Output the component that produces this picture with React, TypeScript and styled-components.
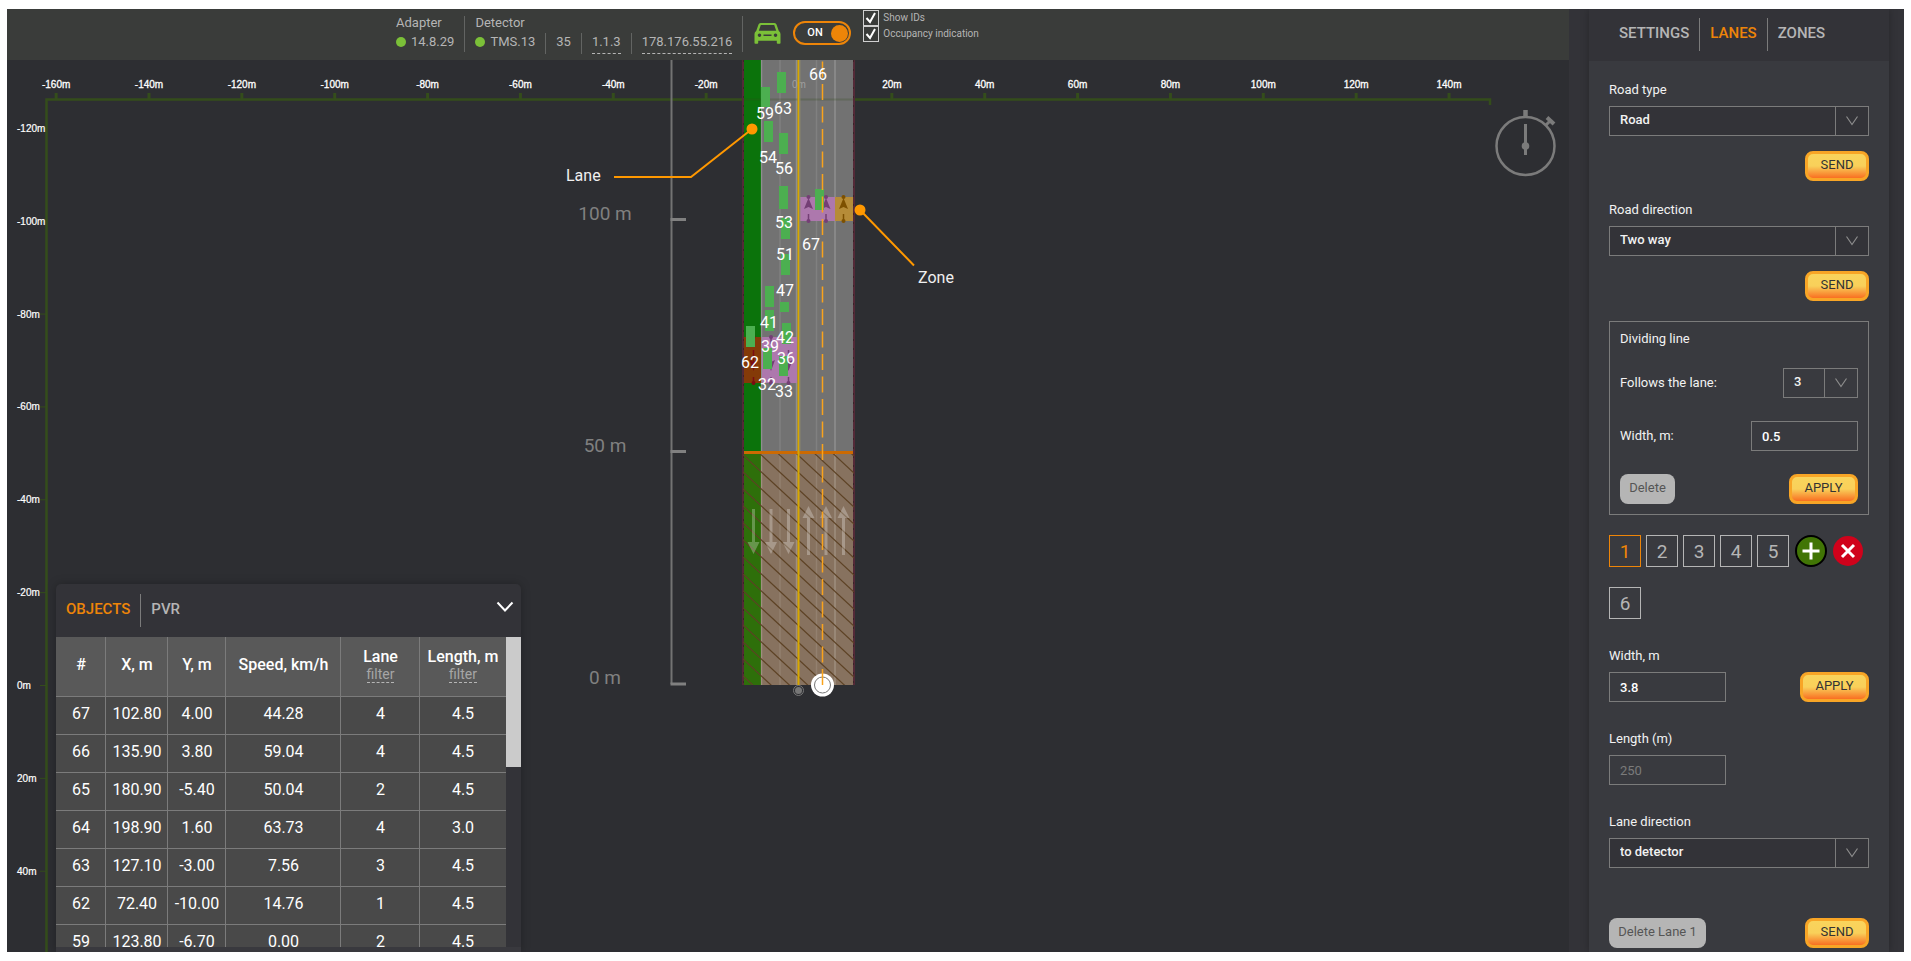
import React, { useId, useState } from "react";
import styled, { createGlobalStyle } from "styled-components";

const orange = "#ee8508";
const line = "#7b7b7b";
const green = "#7bc038";

const GlobalStyle = createGlobalStyle`
  *, *::before, *::after { box-sizing: border-box; }
  body {
    margin: 9px 7px;
    background: #fff;
    font-family: Roboto, "Liberation Sans", sans-serif;
    font-size: 13px;
    line-height: 16px;
    color: #f2f2f2;
  }
  button, input, select { font: inherit; margin: 0; }
`;

const Shell = styled.div`
  display: flex;
  height: calc(100vh - 18px);
  min-height: 640px;
  overflow: hidden;
  background: #333338;
`;

const Main = styled.main`
  flex: 1;
  min-width: 0;
  display: flex;
  flex-direction: column;
`;

/* ---------- top bar ---------- */

const TopBar = styled.header`
  flex: none;
  display: flex;
  align-items: flex-start;
  height: 51px;
  padding-left: 389px;
  background: #3a3c3a;
  color: #b5b5b5;
`;

const Device = styled.section`
  display: flex;
  flex-direction: column;
  gap: 4px;
  height: 36px;
  margin-top: 7px;
  padding-right: 10px;
  margin-right: 10px;
  border-right: 1px solid #626462;
`;

const DeviceName = styled.h2`
  margin: 0;
  font-size: 13px;
  font-weight: 400;
  line-height: 13px;
`;

const DeviceInfo = styled.div`
  display: flex;
  height: 21px;
`;

const InfoCell = styled.span`
  display: flex;
  align-items: flex-start;
  gap: 5px;
  height: 21px;
  line-height: 18px;
  & + & {
    margin-left: 10px;
    padding-left: 10px;
    border-left: 1px solid #626462;
  }
`;

const StatusDot = styled.i`
  width: 10px;
  height: 10px;
  margin-top: 4px;
  border-radius: 50%;
  background: ${green};
`;

const EditLink = styled.a`
  height: 21px;
  color: inherit;
  text-decoration: none;
  border-bottom: 1px dashed #b5b5b5;
`;

const CarIcon = styled.svg`
  width: 27px;
  height: 22px;
  margin: 13px 0 0 1px;
`;

const Toggle = styled.button`
  display: flex;
  align-items: center;
  justify-content: space-between;
  width: 58px;
  height: 24px;
  margin: 12px 12px 0 12px;
  padding: 0 1px 0 12px;
  border: 2px solid ${orange};
  border-radius: 12px;
  background: transparent;
  color: #fff;
  font-size: 11px;
  font-weight: 500;
`;

const Knob = styled.span`
  width: 17px;
  height: 17px;
  border-radius: 50%;
  background: ${orange};
`;

const Checks = styled.div`
  display: flex;
  flex-direction: column;
  margin-top: 1px;
`;

const Check = styled.label`
  display: flex;
  gap: 4px;
  font-size: 10px;
  line-height: 15px;
`;

const CheckBox = styled.input`
  appearance: none;
  width: 16px;
  height: 16px;
  border: 1px solid #d0d0d0;
  background: url("data:image/svg+xml,%3Csvg xmlns='http://www.w3.org/2000/svg' viewBox='0 0 14 14'%3E%3Cpath d='M2.500 7l3.500 4l5 -9' fill='none' stroke='white' stroke-width='2'/%3E%3C/svg%3E");
`;

/* ---------- map ---------- */

const Stage = styled.div`
  position: relative;
  flex: 1;
  min-height: 0;
  overflow: hidden;
  background: #2d2e32;
`;

const MapSvg = styled.svg`
  display: block;
  width: 100%;
  height: 100%;
`;

/* Map drawing is laid out in window units; the group shifts it to the stage. */
const PX_PER_20M = 92.86;
const ZERO_X = 799;
const ZERO_Y = 685;

const cars: [number, number, number][] = [
  [777, 72, 21], [761, 87, 20], [764, 121, 21], [779, 133, 21], [779, 186, 23],
  [781, 218, 21], [781, 254, 21], [815, 189, 21], [765, 286, 21], [780, 302, 10],
  [765, 310, 21], [782, 323, 21], [746, 326, 21], [763, 348, 21], [779, 356, 20],
];

const carLabels: [number, number, number][] = [
  [66, 818, 80], [63, 783, 114], [59, 765, 119], [54, 768, 163], [56, 784, 174],
  [53, 784, 228], [67, 811, 250], [51, 785, 260], [47, 785, 296], [41, 769, 328],
  [42, 785, 343], [39, 770, 352], [36, 786, 364], [62, 750, 368], [32, 767, 390],
  [33, 784, 397],
];

const hatchYs = Array.from({ length: 21 }, (_, i) => 353 + i * 17);

function Ruler() {
  const xs = [-160, -140, -120, -100, -80, -60, -40, -20, 20, 40, 60, 80, 100, 120, 140];
  const ys = [-120, -100, -80, -60, -40, -20, 0, 20, 40];
  return (
    <g fontFamily='"Liberation Sans", Arial, sans-serif' fontSize="10" fill="#fff">
      <path d="M46.5 960V99.500H1490V105" fill="none" stroke="#344d1b" strokeWidth="2.500" />
      {xs.map((m) => {
        const x = ZERO_X + (m / 20) * PX_PER_20M;
        return (
          <g key={m}>
            <rect x={x - 1.5} y="93" width="3" height="6" fill="#344d1b" />
            <text x={x} y="88" textAnchor="middle" stroke="#fff" strokeWidth="0.3">{m}m</text>
          </g>
        );
      })}
      {ys.map((m) => {
        const y = ZERO_Y + (m / 20) * PX_PER_20M;
        return (
          <g key={m}>
            <rect x="40" y={y} width="6" height="1" fill="#344d1b" />
            <text x="17" y={y + 4} stroke="#fff" strokeWidth="0.2">{m}m</text>
          </g>
        );
      })}
    </g>
  );
}

function ZoneArrow({ x, top, bottom, up, color }: { x: number; top: number; bottom: number; up?: boolean; color: string }) {
  const head = up
    ? `M${x} ${top + 1}l4.500 11l-4.500 -2l-4.500 2z`
    : `M${x} ${bottom - 12}l4 -11l-4 2l-4 -2z`;
  return (
    <g fill={color} stroke="none">
      <circle cx={x} cy={top} r="2" />
      <circle cx={x} cy={bottom} r="2" />
      <path d={head} />
      <path d={up ? `M${x} ${bottom - 7}V${bottom}` : `M${x} ${top}v7M${x} ${top + 13}V${bottom - 20}M${x} ${bottom - 6}V${bottom}`} stroke={color} strokeWidth="1.500" />
    </g>
  );
}

function LaneArrow({ x, up }: { x: number; up?: boolean }) {
  const d = up
    ? `M${x} 506l6 12h-4.500v37h-3v-37h-4.500z`
    : `M${x} 554l6 -12h-4.500v-33h-3v33h-4.500z`;
  return <path d={d} fill="#fff" fillOpacity="0.27" />;
}

function Road() {
  return (
    <g>
      <defs>
        <clipPath id="nearField"><rect x="743" y="454" width="111" height="231" /></clipPath>
      </defs>
      <rect x="742" y="60" width="3" height="625" fill="#542a38" />
      <rect x="852" y="60" width="3" height="625" fill="#542a38" />
      <path d="M743.500 60V685M853.500 60V685" stroke="#3b2328" strokeDasharray="2 7" />
      <rect x="744" y="60" width="17" height="394" fill="#0b730b" />
      <rect x="761" y="60" width="92" height="394" fill="#727272" />
      <rect x="744" y="454" width="17" height="231" fill="#2e6f0a" />
      <rect x="761" y="454" width="92" height="231" fill="#87725f" />
      <path d="M761.500 60V685M796.500 60V685M835 60V685" stroke="#fff" strokeOpacity="0.2" strokeWidth="1.500" />
      <path d="M780 60V685M816.500 60V685" stroke="#fff" strokeOpacity="0.1" strokeWidth="1.500" />
      <path d="M744 99.500H853" stroke="#344d1b" strokeOpacity="0.25" strokeWidth="2" />
      <text x="799" y="88" textAnchor="middle" fontFamily='"Liberation Sans", Arial, sans-serif' fontSize="10" fill="#a0a0a0">0m</text>

      <rect x="800" y="197" width="35" height="24" fill="#ad78ad" />
      <rect x="835" y="197" width="18" height="24" fill="#b68c38" />
      <rect x="744" y="337" width="17" height="46" fill="#843a08" />
      <rect x="762" y="337" width="35" height="46" fill="#ad78ad" />
      <ZoneArrow x={808.5} top={197} bottom={221} up color="#743f75" />
      <ZoneArrow x={826} top={197} bottom={221} up color="#743f75" />
      <ZoneArrow x={843.5} top={197} bottom={221} up color="#7d5000" />
      <ZoneArrow x={753.5} top={337} bottom={383} color="#7a0c12" />
      <ZoneArrow x={771} top={337} bottom={383} color="#743f75" />
      <ZoneArrow x={788.5} top={337} bottom={383} color="#743f75" />

      <g clipPath="url(#nearField)" stroke="#5d4225" strokeWidth="1.200">
        {hatchYs.map((y) => <path key={y} d={`M743 ${y}l111 103`} />)}
      </g>
      {[753.5, 771, 788.5].map((x) => <LaneArrow key={x} x={x} />)}
      {[808.5, 826, 843.5].map((x) => <LaneArrow key={x} x={x} up />)}

      <rect x="744" y="451" width="109" height="3" fill="#cc6a02" />
      <path d="M798.500 60V685" stroke="#d8a800" strokeWidth="2" />
      <path d="M799.900 60V451" stroke="#8f8a6c" strokeWidth="1" />

      <g fill="#4caf50">
        {cars.map(([x, y, h]) => <rect key={`${x}-${y}`} x={x} y={y} width="9" height={h} />)}
      </g>
      <circle cx="798.500" cy="690.500" r="5" fill="none" stroke="#777" />
      <circle cx="798.500" cy="690.500" r="3.500" fill="#777" />
      <circle cx="822.500" cy="685" r="11.500" fill="#fff" />
      <circle cx="822.500" cy="685" r="8" fill="none" stroke="#777" />
      <path d="M822.500 685V60" stroke="#f9a31c" strokeWidth="1.500" strokeDasharray="16 6.500" />
      <g fontSize="16" fill="#fff" textAnchor="middle">
        {carLabels.map(([id, x, y]) => <text key={id} x={x} y={y}>{id}</text>)}
      </g>
    </g>
  );
}

function DistanceScale() {
  return (
    <g>
      <path d="M671.500 60V684" stroke="#737373" strokeWidth="2" />
      <path d="M670.500 219.500H686M670.500 451.500H686M670.500 684H686" stroke="#808080" strokeWidth="3" />
      <g fontSize="19" fill="#808080" textAnchor="middle">
        <text x="605" y="220">100 m</text>
        <text x="605" y="452">50 m</text>
        <text x="605" y="684">0 m</text>
      </g>
    </g>
  );
}

function Callouts() {
  return (
    <g>
      <path d="M614 177H691L752 129M860 210L914 265.500" fill="none" stroke="#ff9800" strokeWidth="2" />
      <circle cx="752" cy="129" r="5.500" fill="#ff9800" />
      <circle cx="860" cy="210" r="5.500" fill="#ff9800" />
      <g fontSize="16" fill="#f0f0f0">
        <text x="566" y="181">Lane</text>
        <text x="918" y="283">Zone</text>
      </g>
    </g>
  );
}

function Compass() {
  return (
    <g stroke="#7b7b7b" fill="none">
      <circle cx="1525.500" cy="146" r="29" strokeWidth="2.500" />
      <path d="M1525.500 110V117" strokeWidth="4.500" />
      <path d="M1546 125l4.500 -4.500" strokeWidth="3" />
      <path d="M1547 117.500l7 6.500" strokeWidth="4" />
      <path d="M1525.500 124V155" strokeWidth="3" />
      <circle cx="1525.500" cy="146" r="3.800" fill="#7b7b7b" stroke="none" />
    </g>
  );
}

/* ---------- objects panel ---------- */

const ObjectsPanel = styled.section`
  position: absolute;
  left: 49px;
  bottom: 0;
  display: flex;
  flex-direction: column;
  width: 465px;
  height: 368px;
  border-radius: 5px 5px 0 0;
  background: #333338;
  box-shadow: 0 0 10px rgba(0, 0, 0, 0.25);
`;

const PanelHead = styled.div`
  flex: none;
  display: flex;
  justify-content: space-between;
  align-items: flex-start;
  height: 53px;
  padding: 10px 7px 0 0;
`;

const Tabs = styled.nav`
  display: flex;
`;

const Tab = styled.button<{ $active?: boolean }>`
  height: 33px;
  padding: 0 10px 2px;
  border: 0;
  background: none;
  color: ${(p) => (p.$active ? orange : "#b5b5b5")};
  font-size: 15px;
  font-weight: 500;
  line-height: 31px;
  & + & { border-left: 1px solid ${line}; }
`;

const Collapse = styled.button`
  width: 18px;
  height: 28px;
  padding: 1px 0 0;
  border: 0;
  background: none;
`;

const TableScroll = styled.div`
  display: flex;
  align-items: flex-start;
  height: 310px;
  overflow: hidden;
`;

const ScrollThumb = styled.div`
  flex: 1;
  height: 130px;
  background: #cbcbcb;
`;

const Table = styled.table`
  width: 450px;
  table-layout: fixed;
  border-collapse: separate;
  border-spacing: 0;
  font-size: 16px;
  line-height: 18px;
  text-align: center;
  color: #fff;
`;

const HeadCell = styled.th<{ $w: number }>`
  width: ${(p) => p.$w}px;
  height: 60px;
  padding: 0 0 3px;
  background: #595959;
  border-bottom: 1px solid ${line};
  font-weight: 500;
  white-space: nowrap;
  & + & { box-shadow: -1px 0 0 ${line}; }
`;

const FilterLink = styled.a`
  display: table;
  margin: 0 auto;
  color: #a6a6a6;
  font-size: 14px;
  font-weight: 400;
  line-height: 16px;
  text-decoration: none;
  border-bottom: 1px dashed #b5b5b5;
`;

const Cell = styled.td`
  height: 38px;
  padding: 0 0 3px;
  background: #494949;
  border-bottom: 1px solid ${line};
  & + & { box-shadow: -1px 0 0 ${line}; }
`;

const PanelFoot = styled.div`
  flex: 1;
  background: #39393e;
`;

const columns: { name: string; w: number; filter?: boolean }[] = [
  { name: "#", w: 50 },
  { name: "X, m", w: 62 },
  { name: "Y, m", w: 58 },
  { name: "Speed, km/h", w: 115 },
  { name: "Lane", w: 79, filter: true },
  { name: "Length, m", w: 86, filter: true },
];

const rows = [
  ["67", "102.80", "4.00", "44.28", "4", "4.5"],
  ["66", "135.90", "3.80", "59.04", "4", "4.5"],
  ["65", "180.90", "-5.40", "50.04", "2", "4.5"],
  ["64", "198.90", "1.60", "63.73", "4", "3.0"],
  ["63", "127.10", "-3.00", "7.56", "3", "4.5"],
  ["62", "72.40", "-10.00", "14.76", "1", "4.5"],
  ["59", "123.80", "-6.70", "0.00", "2", "4.5"],
];

/* ---------- sidebar ---------- */

const Sidebar = styled.aside`
  flex: none;
  display: flex;
  flex-direction: column;
  width: 300px;
  margin: 0 15px 0 20px;
  box-shadow: 0 0 8px rgba(0, 0, 0, 0.25);
`;

const SideTabs = styled(Tabs)`
  flex: none;
  height: 52px;
  padding: 9px 20px 0;
  background: #333338;
`;

const SideBody = styled.form`
  flex: 1;
  display: flex;
  flex-direction: column;
  padding: 21px 20px 0;
  background: #393a3f;
`;

const Field = styled.div<{ $w?: number }>`
  display: flex;
  flex-direction: column;
  gap: 8px;
  width: ${(p) => (p.$w ? `${p.$w}px` : "auto")};
`;

const Row = styled.div<{ $end?: boolean; $top?: number; $bottom?: number; $align?: string }>`
  display: flex;
  justify-content: ${(p) => (p.$end ? "flex-end" : "space-between")};
  align-items: ${(p) => p.$align ?? "center"};
  margin-top: ${(p) => p.$top ?? 0}px;
  margin-bottom: ${(p) => p.$bottom ?? 0}px;
`;

const SelectBox = styled.div<{ $w?: number }>`
  position: relative;
  width: ${(p) => (p.$w ? `${p.$w}px` : "100%")};
`;

const SelectInput = styled.select<{ $plain?: boolean }>`
  appearance: none;
  display: block;
  width: 100%;
  height: 30px;
  padding: 0 34px 2px 10px;
  border: 1px solid ${line};
  border-radius: 0;
  background: ${(p) => (p.$plain ? "transparent" : "#333338")};
  color: #f2f2f2;
  font-weight: 500;
`;

const SelectArrow = styled.svg`
  position: absolute;
  top: 0;
  right: 0;
  width: 34px;
  height: 30px;
  pointer-events: none;
`;

const TextInput = styled.input<{ $w: number }>`
  width: ${(p) => p.$w}px;
  height: 30px;
  padding: 0 10px;
  border: 1px solid ${line};
  background: transparent;
  color: #fff;
  font-weight: 500;
  &:disabled { color: #7b7b7b; font-weight: 400; }
`;

const Action = styled.button<{ $w: number }>`
  width: ${(p) => p.$w}px;
  height: 30px;
  padding: 0 0 2px;
  border: 3px solid #f8a526;
  border-radius: 8px;
  background: linear-gradient(#f9d45c 0%, #f9d05a 50%, #f96f22 100%);
  color: #333;
  font-size: 13px;
`;

const GreyAction = styled(Action)`
  border: 0;
  background: #b5b5b5;
  color: #555;
`;

const Fieldset = styled.div`
  margin-top: 20px;
  padding: 9px 10px 10px;
  border: 1px solid ${line};
`;

const LaneGrid = styled.div`
  display: grid;
  grid-template-columns: repeat(7, 32px);
  gap: 20px 5px;
  align-items: center;
  margin: 20px 0 29px;
`;

const LaneButton = styled.button<{ $active?: boolean }>`
  width: 32px;
  height: 32px;
  padding: 2px 0 0;
  border: 1px solid ${(p) => (p.$active ? orange : "#b5b5b5")};
  background: none;
  color: ${(p) => (p.$active ? orange : "#b5b5b5")};
  font-size: 19px;
`;

const RoundButton = styled.button`
  display: grid;
  place-items: center;
  width: 34px;
  height: 32px;
  padding: 0;
  border: 0;
  background: none;
`;

function Select({ id, options, width, plain }: { id: string; options: string[]; width?: number; plain?: boolean }) {
  return (
    <SelectBox $w={width}>
      <SelectInput id={id} $plain={plain}>
        {options.map((o) => <option key={o}>{o}</option>)}
      </SelectInput>
      <SelectArrow viewBox="0 0 34 30" fill="none" aria-hidden="true">
        <path d="M0.500 0V30" stroke={line} />
        <path d="M11.500 10.500l5.500 8l5.500 -8" stroke="#8c8c8c" strokeWidth="1.200" />
      </SelectArrow>
    </SelectBox>
  );
}

function SelectField({ label, options }: { label: string; options: string[] }) {
  const id = useId();
  return (
    <Field>
      <label htmlFor={id}>{label}</label>
      <Select id={id} options={options} />
    </Field>
  );
}

export default function App() {
  const [lane, setLane] = useState(1);
  const laneButton = (n: number) => (
    <LaneButton key={n} type="button" $active={lane === n} onClick={() => setLane(n)}>{n}</LaneButton>
  );
  return (
    <Shell>
      <GlobalStyle />
      <Main>
        <TopBar>
          <Device>
            <DeviceName>Adapter</DeviceName>
            <DeviceInfo><InfoCell><StatusDot />14.8.29</InfoCell></DeviceInfo>
          </Device>
          <Device>
            <DeviceName>Detector</DeviceName>
            <DeviceInfo>
              <InfoCell><StatusDot />TMS.13</InfoCell>
              <InfoCell>35</InfoCell>
              <InfoCell><EditLink href="#version">1.1.3</EditLink></InfoCell>
              <InfoCell><EditLink href="#address">178.176.55.216</EditLink></InfoCell>
            </DeviceInfo>
          </Device>
          <CarIcon viewBox="0 0 27 22" aria-label="Vehicle">
            <path fillRule="evenodd" fill={green} d="M6.500 1h14q1.500 0 2 1.500l2.300 6.500q1.700 1 1.700 3v9q0 .8-.8.8h-2q-.9 0-.9-.8v-2.200h-18.600v2.200q0 .8-.9.800h-2q-.8 0-.8-.8v-9q0-2 1.700-3l2.300-6.500q.5-1.500 2-1.500zM6.800 3l-2 5.700h17.400l-2-5.700zM5.500 11.500a1.700 1.700 0 1 0 .01 0zM21.500 11.500a1.700 1.700 0 1 0 .01 0zM9.500 12.500v1.500h8v-1.500z" />
          </CarIcon>
          <Toggle type="button" role="switch" aria-checked="true">ON<Knob /></Toggle>
          <Checks>
            <Check><CheckBox type="checkbox" defaultChecked />Show IDs</Check>
            <Check><CheckBox type="checkbox" defaultChecked />Occupancy indication</Check>
          </Checks>
        </TopBar>
        <Stage>
          <MapSvg>
            <g transform="translate(-7 -60)">
              <Ruler />
              <Road />
              <DistanceScale />
              <Callouts />
              <Compass />
            </g>
          </MapSvg>
          <ObjectsPanel>
            <PanelHead>
              <Tabs>
                <Tab type="button" $active>OBJECTS</Tab>
                <Tab type="button">PVR</Tab>
              </Tabs>
              <Collapse type="button" aria-label="Collapse">
                <svg width="18" height="12" viewBox="0 0 18 12" fill="none">
                  <path d="M1.500 1.500l7.500 8l7.500 -8" stroke="#fff" strokeWidth="2" />
                </svg>
              </Collapse>
            </PanelHead>
            <TableScroll>
              <Table>
                <thead>
                  <tr>
                    {columns.map((c) => (
                      <HeadCell key={c.name} $w={c.w}>
                        {c.name}
                        {c.filter && <FilterLink href="#filter">filter</FilterLink>}
                      </HeadCell>
                    ))}
                  </tr>
                </thead>
                <tbody>
                  {rows.map((r) => (
                    <tr key={r[0]}>{r.map((v, i) => <Cell key={i}>{v}</Cell>)}</tr>
                  ))}
                </tbody>
              </Table>
              <ScrollThumb />
            </TableScroll>
            <PanelFoot />
          </ObjectsPanel>
        </Stage>
      </Main>

      <Sidebar>
        <SideTabs>
          <Tab type="button">SETTINGS</Tab>
          <Tab type="button" $active>LANES</Tab>
          <Tab type="button">ZONES</Tab>
        </SideTabs>
        <SideBody onSubmit={(e) => e.preventDefault()}>
          <SelectField label="Road type" options={["Road", "Crossroad"]} />
          <Row $end $top={15} $bottom={21}><Action $w={64}>SEND</Action></Row>
          <SelectField label="Road direction" options={["Two way", "One way"]} />
          <Row $end $top={15}><Action $w={64}>SEND</Action></Row>

          <Fieldset>
            <div>Dividing line</div>
            <Row $top={21}>
              <label htmlFor="follows">Follows the lane:</label>
              <Select id="follows" options={["3", "1", "2", "4", "5", "6"]} width={75} plain />
            </Row>
            <Row $top={23}>
              <label htmlFor="dividerWidth">Width, m:</label>
              <TextInput id="dividerWidth" $w={107} defaultValue="0.5" />
            </Row>
            <Row $top={23}>
              <GreyAction $w={55} type="button">Delete</GreyAction>
              <Action $w={69}>APPLY</Action>
            </Row>
          </Fieldset>

          <LaneGrid>
            {[1, 2, 3, 4, 5].map(laneButton)}
            <RoundButton type="button" aria-label="Add lane">
              <svg width="32" height="32" viewBox="0 0 32 32">
                <circle cx="16" cy="16" r="15" fill="#417505" stroke="#000" strokeWidth="2" />
                <path d="M16 7.500V24.500M7.500 16H24.500" stroke="#fff" strokeWidth="3" />
              </svg>
            </RoundButton>
            <RoundButton type="button" aria-label="Remove lane">
              <svg width="30" height="30" viewBox="0 0 30 30">
                <circle cx="15" cy="15" r="15" fill="#d0021b" />
                <path d="M9 9L21 21M21 9L9 21" stroke="#fff" strokeWidth="3" />
              </svg>
            </RoundButton>
            {laneButton(6)}
          </LaneGrid>

          <Row $align="flex-end" $bottom={29}>
            <Field>
              <label htmlFor="laneWidth">Width, m</label>
              <TextInput id="laneWidth" $w={117} defaultValue="3.8" />
            </Field>
            <Action $w={69}>APPLY</Action>
          </Row>
          <Row $bottom={29}>
            <Field>
              <label htmlFor="laneLength">Length (m)</label>
              <TextInput id="laneLength" $w={117} defaultValue="250" disabled />
            </Field>
          </Row>
          <SelectField label="Lane direction" options={["to detector", "from detector"]} />
          <Row $top={50}>
            <GreyAction $w={97} type="button">Delete Lane {lane}</GreyAction>
            <Action $w={64}>SEND</Action>
          </Row>
        </SideBody>
      </Sidebar>
    </Shell>
  );
}
